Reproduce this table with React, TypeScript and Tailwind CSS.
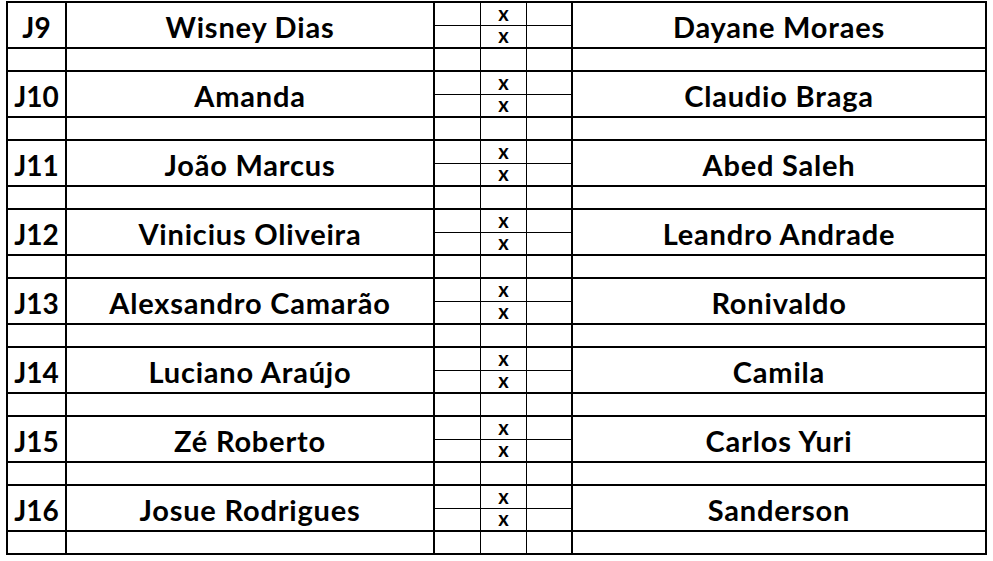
import React from "react";

const rows = [
  ["J9", "Wisney Dias", "Dayane Moraes"],
  ["J10", "Amanda", "Claudio Braga"],
  ["J11", "João Marcus", "Abed Saleh"],
  ["J12", "Vinicius Oliveira", "Leandro Andrade"],
  ["J13", "Alexsandro Camarão", "Ronivaldo"],
  ["J14", "Luciano Araújo", "Camila"],
  ["J15", "Zé Roberto", "Carlos Yuri"],
  ["J16", "Josue Rodrigues", "Sanderson"],
];

function ScoreLine({ h, last }: { h: string; last?: boolean }) {
  return (
    <div className={`flex ${h} ${last ? "" : "border-b border-black"}`}>
      <div className="w-[46px] border-r border-black" />
      <div className="w-[46px] border-r border-black flex items-center justify-center pb-[3px]">
        <span className="text-[20px] leading-[12px] font-bold">x</span>
      </div>
      <div className="w-[46px] border-r-2 border-black" />
    </div>
  );
}

export default function App() {
  return (
    <div className="w-[993px] h-[561px] bg-white" style={{ fontFamily: "Lato, 'Open Sans', sans-serif" }}>
      <div className="ml-[6px] pt-[1px]">
        <div className="w-[981px] border-2 border-black text-black">
          {rows.map(([id, a, b], i) => (
            <div key={id} className={i === rows.length - 1 ? "" : "border-b-2 border-black"}>
              <div className="flex h-[46px] border-b-2 border-black">
                <div className="w-[59px] border-r-2 border-black flex items-center justify-center text-[28px] font-bold leading-none pt-[3px]">
                  {id}
                </div>
                <div className="w-[368px] border-r-2 border-black flex items-center justify-center text-[29px] tracking-[0.8px] font-bold leading-none pt-[3px]">
                  {a}
                </div>
                <div className="flex flex-col">
                  <ScoreLine h="h-[23px]" />
                  <ScoreLine h="h-[21px]" last />
                </div>
                <div className="w-[412px] flex items-center justify-center text-[29px] tracking-[0.8px] font-bold leading-none pt-[3px]">
                  {b}
                </div>
              </div>
              <div className="flex h-[21px]">
                <div className="w-[59px] border-r-2 border-black" />
                <div className="w-[368px] border-r-2 border-black" />
                <div className="w-[46px] border-r border-black" />
                <div className="w-[46px] border-r border-black" />
                <div className="w-[46px] border-r-2 border-black" />
                <div className="w-[412px]" />
              </div>
            </div>
          ))}
        </div>
      </div>
    </div>
  );
}
